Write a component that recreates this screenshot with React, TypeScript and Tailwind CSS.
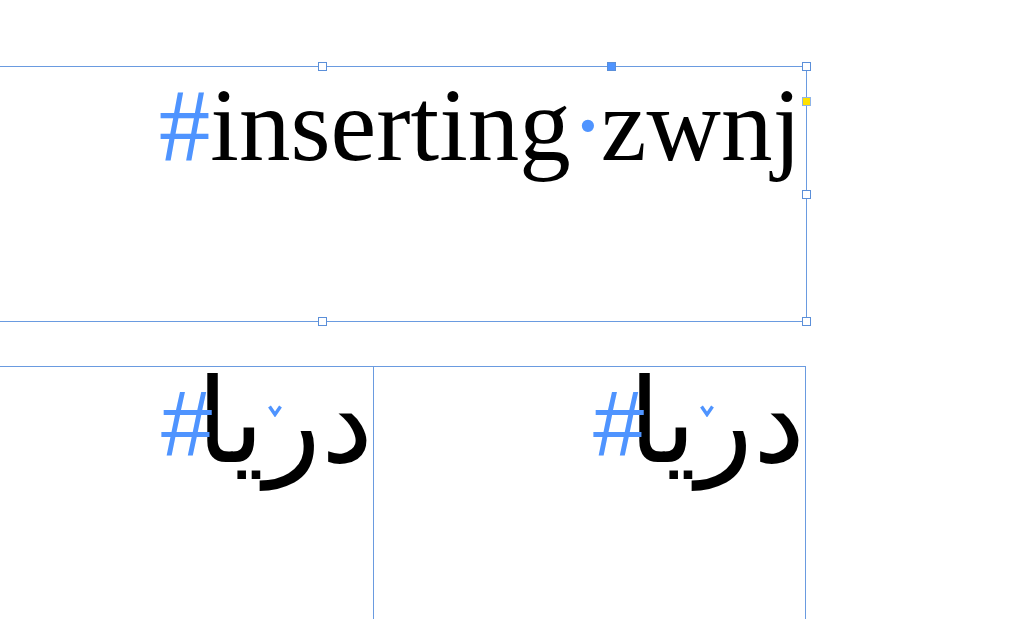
import React from 'react';

const blue = 'text-[#4f94ff]';

function Handle({ className }: { className: string }) {
  return <div className={`absolute h-[9px] w-[9px] border border-[#5b8fd9] ${className}`} />;
}

function ZwnjMark() {
  // InDesign's hidden-character marker for a zero-width non-joiner
  return (
    <span className="relative inline-block w-0">
      <svg className="absolute left-[4px] top-[-57px]" width="14" height="12" viewBox="0 0 14 12">
        <path d="M1.5 1.5 L7 9.5 L12.5 1.5" fill="none" stroke="#4f94ff" strokeWidth="3.4" />
      </svg>
    </span>
  );
}

function ArabicCell() {
  return (
    <div className="h-[253px] w-[432px] border-r border-[#6a9be0] pt-[2px]">
      <div
        dir="rtl"
        className="text-right text-[117px] leading-[0.9] text-black"
        style={{ fontFamily: '"DejaVu Sans", sans-serif' }}
      >
        <span>در</span>
        <ZwnjMark />
        <span>یا</span>
        <span
          className={`relative -top-[6px] mr-[-16px] text-[92px] ${blue}`}
          style={{ fontFamily: '"Liberation Sans", sans-serif' }}
        >
          #
        </span>
      </div>
    </div>
  );
}

export default function App() {
  return (
    <div className="h-[619px] w-[1029px] overflow-hidden bg-white">
      <div className="pt-[66px]">
        <div className="relative ml-[-162px] h-[256px] w-[969px] border border-[#6a9be0]">
          <div
            className="pr-[5px] pt-[7px] text-right text-[103px] leading-none text-black"
            style={{ fontFamily: '"Liberation Serif", serif' }}
          >
            <span className={blue}>#</span>inserting
            <span className={`inline-block w-[30px] text-center ${blue}`}>·</span>
            zwnj
          </div>
          <Handle className="left-[479px] top-[-5px] bg-white" />
          <Handle className="left-[768px] top-[-5px] bg-[#4f94ff]" />
          <Handle className="right-[-5px] top-[-5px] bg-white" />
          <Handle className="right-[-5px] top-[30px] border-[#8fb4e8] bg-[#ffe100]" />
          <Handle className="right-[-5px] top-[123px] bg-white" />
          <Handle className="bottom-[-5px] left-[479px] bg-white" />
          <Handle className="bottom-[-5px] right-[-5px] bg-white" />
        </div>
      </div>
      <div className="ml-[-58px] mt-[44px] flex w-fit border-t border-[#6a9be0]">
        <ArabicCell />
        <ArabicCell />
      </div>
    </div>
  );
}
